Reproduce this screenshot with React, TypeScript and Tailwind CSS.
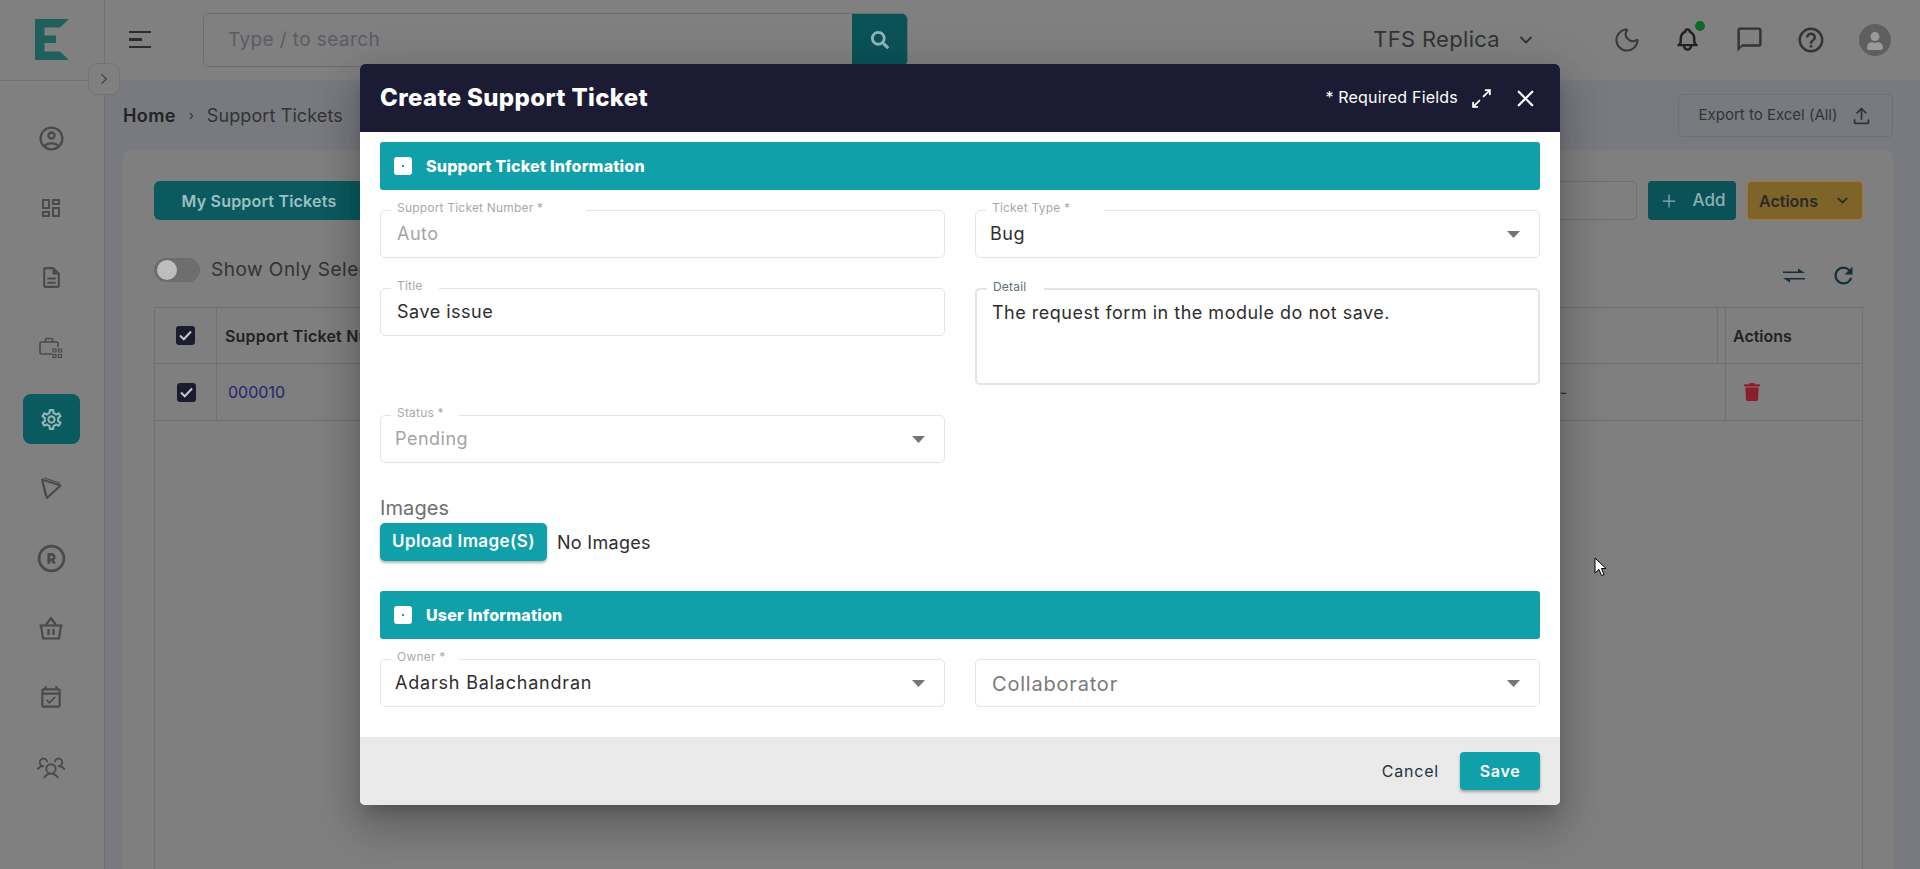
import { ChevronDown, ChevronRight, Moon, Plus, X } from "lucide-react";
import { FaSearch, FaTrash, FaUser } from "react-icons/fa";
import {
  MdOutlineAccountCircle,
  MdOutlineChatBubbleOutline,
  MdOutlineDashboard,
  MdOutlineDescription,
  MdOutlineEventAvailable,
  MdOutlineHelpOutline,
  MdOutlineSettings,
  MdRefresh,
} from "react-icons/md";
import { TbArrowsDiagonal, TbBell, TbRegistered, TbUpload } from "react-icons/tb";
import { PiUsersThree } from "react-icons/pi";
import type { ReactNode } from "react";

function BriefcaseGrid() {
  return (
    <svg width="26" height="24" viewBox="0 0 26 24" fill="none" stroke="#4a4a4a" strokeWidth="1.6">
      <path d="M14 18H3.500A1.500 1.500 0 0 1 2 16.500V7.500A1.500 1.500 0 0 1 3.500 6h15A1.500 1.500 0 0 1 20 7.500V11" />
      <path d="M7.500 6V3.500A1 1 0 0 1 8.500 2.500h5a1 1 0 0 1 1 1V6" />
      <path d="M15 13h3v3h-3zM20.500 13h3v3h-3zM15 18.500h3v3h-3zM20.500 18.500h3v3h-3z" strokeWidth="1.2" />
    </svg>
  );
}

function PlayIcon() {
  return (
    <svg width="24" height="24" viewBox="0 0 24 24" fill="none" stroke="#4a4a4a" strokeWidth="2" strokeLinejoin="round" strokeLinecap="round">
      <path d="M3 3.500 21.500 9.500 8 22z" />
      <path d="M5.500 2 20.500 7M3.500 6 6.500 20" strokeWidth="1.200" />
    </svg>
  );
}

function BasketIcon() {
  return (
    <svg width="26" height="24" viewBox="0 0 26 24" fill="none" stroke="#4a4a4a" strokeWidth="2.200" strokeLinejoin="round">
      <path d="M1.500 9.500h23" />
      <path d="M3 9.500 5 22.500h16l2-13" />
      <path d="M8 9 13 2l5 7" />
      <path d="M10.500 13v6M15.500 13v6" strokeWidth="2.400" />
    </svg>
  );
}

function SwapIcon() {
  return (
    <svg width="24" height="22" viewBox="0 0 24 22" fill="#123038">
      <path d="M1 6.500h15V3.500l7 4.500H1zM23 14.500H8v3l-7-4.500h22z" />
    </svg>
  );
}

function Logo() {
  return (
    <svg width="34" height="41" viewBox="0 0 34 41">
      <path
        fill="#1f5f5c"
        d="M0 0h34l-9 8.500H9.500v8h11.500v7.500H9.500v8.500H25l9 8.500H0z"
      />
    </svg>
  );
}

function Caret() {
  return (
    <svg width="13" height="7" viewBox="0 0 13 7" className="shrink-0">
      <path d="M0 0h13L6.500 7z" fill="#757575" />
    </svg>
  );
}

function SideIcon({ y, children }: { y: string; children: ReactNode }) {
  return <div className={`flex items-center justify-center text-[#4a4a4a] ${y}`}>{children}</div>;
}

function Sidebar() {
  return (
    <aside className="relative w-[105px] shrink-0 border-r border-[#707070] bg-[#808080]">
      <div className="flex h-[81px] items-center border-b border-[#707070] pl-[35px] pb-[2px]">
        <Logo />
      </div>
      <div className="absolute left-[88px] top-[63px] z-10 flex h-[32px] w-[32px] items-center justify-center rounded-[9px] border border-[#727272] bg-[#808080]">
        <ChevronRight size={18} strokeWidth={1.5} color="#444" />
      </div>
      <nav className="flex flex-col items-center pt-[33px] pr-[2px]">
        <SideIcon y="h-[48px]"><MdOutlineAccountCircle size={29} /></SideIcon>
        <SideIcon y="mt-[22px] h-[48px]"><MdOutlineDashboard size={24} /></SideIcon>
        <SideIcon y="mt-[21px] h-[48px]"><MdOutlineDescription size={25} /></SideIcon>
        <SideIcon y="mt-[23px] h-[48px]"><BriefcaseGrid /></SideIcon>
        <div className="mt-[22px] flex h-[50px] w-[57px] items-center justify-center rounded-[8px] bg-[#0a5b60] text-[#93b5b5]">
          <MdOutlineSettings size={25} />
        </div>
        <SideIcon y="mt-[20px] h-[48px]"><PlayIcon /></SideIcon>
        <SideIcon y="mt-[22px] h-[48px]"><TbRegistered size={33} strokeWidth={2} /></SideIcon>
        <SideIcon y="mt-[22px] h-[48px]"><BasketIcon /></SideIcon>
        <SideIcon y="mt-[22px] h-[48px]"><MdOutlineEventAvailable size={26} /></SideIcon>
        <SideIcon y="mt-[21px] h-[48px]"><PiUsersThree size={30} /></SideIcon>
      </nav>
    </aside>
  );
}

function TopBar() {
  return (
    <header className="flex h-[80px] shrink-0 items-center bg-[#808080] pl-[24px] pr-[29px] pb-[1px]">
      <div className="flex w-[74px] flex-col gap-[5px]">
        <span className="h-[2.500px] w-[22px] bg-[#2c2c2c]" />
        <span className="h-[2.500px] w-[13px] bg-[#2c2c2c]" />
        <span className="h-[2.500px] w-[22px] bg-[#2c2c2c]" />
      </div>
      <div className="flex h-[54px] w-[705px] items-stretch rounded-[6px] border border-[#6c6c6c]">
        <span className="flex-1 self-center pl-[24px] pt-[2px] text-[19px] tracking-[0.4px] text-[#5b5c64]">Type / to search</span>
        <span className="flex w-[55px] items-center justify-center rounded-r-[5px] bg-[#0a5257] text-[#93b5b5]">
          <FaSearch size={18} />
        </span>
      </div>
      <div className="ml-auto flex items-center">
        <span className="text-[22px] tracking-[0.3px] text-[#333]">TFS Replica</span>
        <ChevronDown size={20} color="#333" strokeWidth={2.2} className="ml-[16px]" />
        <Moon size={28} color="#3a3a3a" strokeWidth={1.8} className="ml-[77px]" />
        <span className="relative ml-[33px] flex">
          <TbBell size={27} color="#222" strokeWidth={2.2} />
          <span className="absolute -top-[5px] right-[-4px] h-[10px] w-[10px] rounded-full bg-[#0b6b25]" />
        </span>
        <MdOutlineChatBubbleOutline size={29} color="#333" className="ml-[34px]" />
        <MdOutlineHelpOutline size={30} color="#333" className="ml-[32px]" />
        <span className="ml-[33px] flex h-[32px] w-[32px] items-end justify-center overflow-hidden rounded-full bg-[#5f5f5f] pb-[6px] text-[#9a9a9a]">
          <FaUser size={18} />
        </span>
      </div>
    </header>
  );
}

function Background() {
  return (
    <div className="flex h-[869px] overflow-hidden bg-[#808080] text-[#2c2c2c]">
      <Sidebar />
      <div className="flex min-w-0 flex-1 flex-col">
        <TopBar />
        <main className="flex flex-1 flex-col bg-[#787a80] pl-[18px] pr-[27px]">
          <div className="flex h-[70px] items-center justify-between pt-[1px]">
            <div className="flex items-center text-[18px]">
              <span className="font-semibold tracking-[0.4px] text-[#222]">Home</span>
              <span className="mx-[13px] text-[13px]">›</span>
              <span className="tracking-[0.1px] text-[#333]">Support Tickets</span>
            </div>
            <div className="flex h-[43px] w-[215px] items-center justify-center gap-[14px] rounded-[4px] border border-[#6f7075] text-[15px] text-[#333]">
              Export to Excel (All)
              <TbUpload size={21} />
            </div>
          </div>
          <section className="flex flex-1 flex-col rounded-t-[8px] bg-[#7f7f7f] pl-[31px] pr-[30px] pt-[31px]">
            <div className="flex h-[39px] items-stretch justify-between">
              <div className="flex w-[210px] items-center justify-center rounded-[6px] bg-[#0a5a5f] text-[16px] font-semibold tracking-[0.2px] text-[#9fc0c0]">
                My Support Tickets
              </div>
              <div className="flex gap-[11px]">
                <div className="w-[400px] rounded-[4px] border border-[#707070]" />
                <div className="flex w-[88px] items-center justify-center gap-[14px] rounded-[4px] bg-[#0a5257] text-[17px] font-medium text-[#8fb0b0]">
                  <Plus size={20} strokeWidth={1.5} />
                  Add
                </div>
                <div className="flex w-[116px] items-center justify-center gap-[16px] rounded-[4px] border border-[#a7762c] bg-[#7f6429] text-[16px] font-semibold text-[#2a2a2a]">
                  Actions
                  <ChevronDown size={17} strokeWidth={2.4} />
                </div>
              </div>
            </div>
            <div className="flex h-[87px] items-start justify-between pr-[6px]">
              <div className="mt-[36px] flex items-center gap-[11px]">
                <span className="flex h-[24px] w-[46px] items-center rounded-full border border-[#6a6a6a] bg-[#6e6e6e] pl-[2px]">
                  <span className="h-[20px] w-[20px] rounded-full bg-[#bdbdbd]" />
                </span>
                <span className="text-[19px] tracking-[0.5px] text-[#333]">Show Only Selected</span>
              </div>
              <div className="mt-[42px] flex items-center gap-[24px] text-[#123038]">
                <SwapIcon />
                <MdRefresh size={27} />
              </div>
            </div>
            <div className="flex flex-1 flex-col border-x border-t border-[#707070]">
              <div className="flex h-[56px] border-b border-[#707070]">
                <div className="flex w-[62px] items-center justify-center border-r border-[#707070] pr-[1px]">
                  <TableCheck />
                </div>
                <div className="flex flex-1 items-center border-r border-[#707070] pl-[8px] text-[16px] font-semibold tracking-[0.2px] text-[#222]">
                  Support Ticket Number
                </div>
                <div className="w-[8px] border-r border-[#707070]" />
                <div className="flex w-[136px] items-center pl-[7px] text-[16px] font-semibold text-[#222]">Actions</div>
              </div>
              <div className="flex h-[57px] border-b border-[#707070]">
                <div className="flex w-[62px] items-center justify-center border-r border-[#707070] pl-[1px]">
                  <TableCheck />
                </div>
                <div className="flex flex-1 items-center border-r border-[#707070] pl-[11px] text-[16px] text-[#25256f]">
                  000010
                  <span className="ml-auto mr-[158px] text-[#333]">-</span>
                </div>
                <div className="flex w-[136px] items-center pl-[17px] text-[#8a1f2b]">
                  <FaTrash size={18} />
                </div>
              </div>
            </div>
          </section>
        </main>
      </div>
    </div>
  );
}

function TableCheck() {
  return (
    <span className="flex h-[19px] w-[19px] items-center justify-center rounded-[3px] bg-[#1b1c30]">
      <svg width="13" height="11" viewBox="0 0 13 11" fill="none" stroke="#c8c8c8" strokeWidth="2">
        <path d="M1 5.500 4.800 9.200 12 1.500" />
      </svg>
    </span>
  );
}

interface FieldProps {
  label?: string;
  labelBox?: string;
  labelTone?: string;
  value: string;
  valueTone?: string;
  select?: boolean;
  height?: string;
  border?: string;
  inset?: string;
}

function Field({
  label,
  labelBox = "",
  labelTone = "text-[#a9a9a9]",
  value,
  valueTone = "pb-[2px] text-[18px] tracking-[0.5px] text-[#2e2e2e]",
  select,
  height = "h-[48px] items-center",
  border = "border border-[#e4e4e4]",
  inset = "pl-[16px]",
}: FieldProps) {
  return (
    <div className={`relative flex rounded-[5px] pr-[19px] ${height} ${border} ${inset}`}>
      {label && (
        <span className={`absolute -top-[11px] left-[10px] h-[16px] bg-white pl-[6px] text-[12px] leading-[16px] tracking-[0.2px] ${labelBox} ${labelTone}`}>
          {label}
        </span>
      )}
      <span className={`flex-1 ${valueTone}`}>{value}</span>
      {select && <Caret />}
    </div>
  );
}

function SectionBar({ title }: { title: string }) {
  return (
    <div className="flex h-[48px] items-center gap-[14px] rounded-[3px] bg-[#10a0a9] pl-[14px] text-[16px] font-extrabold tracking-[0.2px] text-white">
      <span className="flex h-[18px] w-[18px] items-center justify-center rounded-[3px] bg-white">
        <span className="h-[2px] w-[2px] bg-[#10a0a9]" />
      </span>
      <span className="pb-[1px]">{title}</span>
    </div>
  );
}

function TicketModal() {
  return (
    <div className="absolute left-[360px] top-[64px] flex h-[741px] w-[1200px] flex-col overflow-hidden rounded-[5px] bg-white shadow-[0_11px_15px_-7px_rgba(0,0,0,0.2),0_24px_38px_3px_rgba(0,0,0,0.14),0_9px_46px_8px_rgba(0,0,0,0.12)]">
      <div className="flex h-[68px] shrink-0 items-center bg-[#1b1c33] pl-[20px] pr-[21px] text-white">
        <h2 className="text-[24px] font-extrabold tracking-[0.35px]">Create Support Ticket</h2>
        <span className="ml-auto -translate-y-[1px] text-[16px] tracking-[0.2px]">* Required Fields</span>
        <TbArrowsDiagonal size={25} strokeWidth={1.8} className="ml-[11px]" />
        <X size={27} strokeWidth={2} className="ml-[18px]" />
      </div>
      <div className="flex-1 px-[20px] pt-[10px]">
        <SectionBar title="Support Ticket Information" />
        <div className="mt-[20px] grid grid-cols-2 items-start gap-x-[30px] gap-y-[30px]">
          <Field label="Support Ticket Number *" labelBox="w-[195px]" value="Auto" valueTone="pb-[2px] text-[18px] tracking-[0.5px] text-[#a4a4a4]" />
          <Field label="Ticket Type *" labelBox="w-[118px]" value="Bug" select inset="pl-[14px]" />
          <Field label="Title" labelBox="w-[48px]" value="Save issue" />
          <Field
            label="Detail"
            labelBox="w-[57px]"
            labelTone="text-[#5c6f7a]"
            value="The request form in the module do not save."
            height="h-[97px] items-start pt-[9px]"
            border="border-2 border-[#e4e4e4]"
            inset="pl-[15px]"
          />
          <Field label="Status *" labelBox="w-[68px]" value="Pending" valueTone="pb-[2px] text-[18px] tracking-[0.5px] text-[#a4a4a4]" select inset="pl-[14px]" />
        </div>
        <div className="mt-[31px] text-[20px] leading-[29px] tracking-[0.1px] text-[#6f6f6f]">Images</div>
        <div className="flex items-center">
          <button className="h-[38px] w-[167px] rounded-[5px] bg-[#10a0a9] text-[17px] font-semibold tracking-[0.4px] text-white shadow-[0_2px_3px_rgba(0,0,0,0.3)]">
            Upload Image(S)
          </button>
          <span className="ml-[10px] text-[18px] tracking-[0.3px] text-[#2e2e2e]">No Images</span>
        </div>
        <div className="mt-[30px]">
          <SectionBar title="User Information" />
        </div>
        <div className="mt-[20px] grid grid-cols-2 gap-x-[30px]">
          <Field label="Owner *" labelBox="w-[68px]" value="Adarsh Balachandran" valueTone="pb-[2px] text-[18px] tracking-[0.8px] text-[#2e2e2e]" select inset="pl-[14px]" />
          <Field value="Collaborator" valueTone="pt-[1px] text-[20px] tracking-[0.8px] text-[#7a7a7a]" select />
        </div>
      </div>
      <div className="flex h-[68px] shrink-0 items-center justify-end gap-[21px] bg-[#eaeaea] pr-[20px]">
        <span className="text-[16px] tracking-[0.8px] text-[#25333d]">Cancel</span>
        <button className="h-[38px] w-[80px] rounded-[4px] bg-[#10a0a9] text-[16px] font-semibold tracking-[0.7px] text-white shadow-[0_2px_3px_rgba(0,0,0,0.3)]">
          Save
        </button>
      </div>
    </div>
  );
}

export default function App() {
  return (
    <div className="relative h-[869px] w-[1920px] overflow-hidden font-['Inter','Liberation_Sans',sans-serif]">
      <Background />
      <TicketModal />
      <svg className="absolute left-[1594px] top-[557px]" width="13" height="20" viewBox="0 0 13 20">
        <path d="M1 1v15l4-3.500 2.500 6 2.500-1-2.500-6H12z" fill="#fff" stroke="#000" strokeWidth="1" />
      </svg>
    </div>
  );
}
